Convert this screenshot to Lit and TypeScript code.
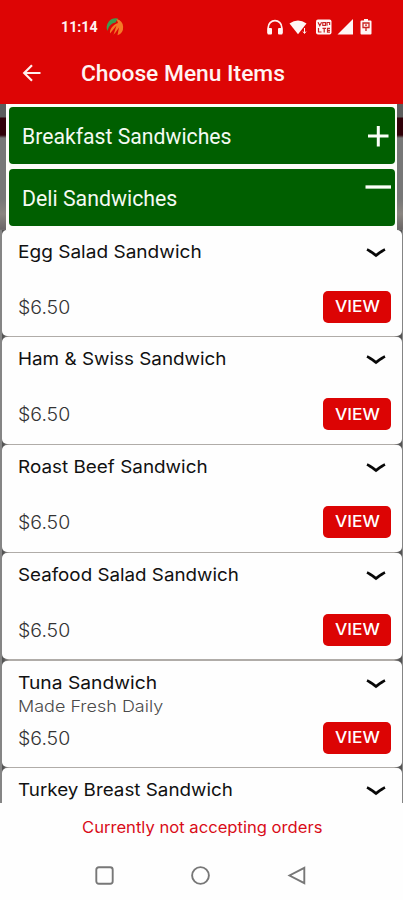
import { LitElement, html, svg, css } from "lit";
import { customElement, property } from "lit/decorators.js";

/** One line of text, set wide or narrow so that it spans the given width. */
@customElement("fitted-text")
class FittedText extends LitElement {
  static styles = css`
    :host { display: block; white-space: nowrap; }
    .run { display: inline-block; transform-origin: 0 50%; }
  `;
  @property() text = "";
  @property({ type: Number }) span = 0;
  updated() {
    const run = this.renderRoot.querySelector(".run") as HTMLElement;
    run.style.transform = `scaleX(${this.span / run.offsetWidth})`;
    this.style.width = `${this.span}px`;
  }
  render() {
    return html`<span class="run">${this.text}</span>`;
  }
}

interface Item { name: string; span: number; note?: string; price?: string; }

const items: Item[] = [
  { name: "Egg Salad Sandwich", span: 184, price: "$6.50" },
  { name: "Ham & Swiss Sandwich", span: 208, price: "$6.50" },
  { name: "Roast Beef Sandwich", span: 190, price: "$6.50" },
  { name: "Seafood Salad Sandwich", span: 221, price: "$6.50" },
  { name: "Tuna Sandwich", span: 138.5, note: "Made Fresh Daily", price: "$6.50" },
  { name: "Turkey Breast Sandwich", span: 215 },
];

@customElement("menu-card")
class MenuCard extends LitElement {
  static styles = css`
    :host { display: block; height: 107.8px; box-sizing: border-box; padding: 0 1px 1.4px 2px; }
    .card {
      height: 100%; box-sizing: border-box; background: #fefefe; border-radius: 5px;
      padding: 10px 11px 0 16px; display: flex; flex-direction: column;
      font-family: Inter, sans-serif; color: #111;
    }
    .top { display: flex; justify-content: space-between; height: 24px; }
    .name { font-size: 17.5px; line-height: 24px; }
    .chev { width: 20px; height: 10px; margin: 8px 5px 0 0; }
    .note { height: 23px; font-size: 16.5px; line-height: 22px; font-weight: 300; color: #4a4a4a; }
    .bottom { display: flex; justify-content: space-between; align-items: flex-start; padding-top: 4px; }
    .price { font-size: 18px; line-height: 33px; font-weight: 300; color: #333; }
    .view {
      width: 68px; height: 32px; border-radius: 5px; background: #dc0404; color: #fff;
      display: flex; align-items: center; justify-content: center;
      font-size: 15.6px; line-height: 20px; font-weight: 500; padding-top: .5px; box-sizing: border-box;
    }
  `;
  @property({ attribute: false }) item!: Item;
  render() {
    const i = this.item;
    return html`<div class="card">
      <div class="top">
        <fitted-text class="name" .text=${i.name} .span=${i.span}></fitted-text>
        <svg class="chev" viewBox="0 0 20 10"><path d="M1 1.500C3.500 2.500 7 5.200 10 7.400C13 5.200 16.500 2.500 19 1.500" fill="none" stroke="#080808" stroke-width="2.900"/></svg>
      </div>
      <div class="note">${i.note ? html`<fitted-text .text=${i.note} .span=${145}></fitted-text>` : ""}</div>
      ${i.price
        ? html`<div class="bottom">
            <fitted-text class="price" .text=${i.price} .span=${52}></fitted-text>
            <div class="view"><fitted-text .text=${"VIEW"} .span=${44.5}></fitted-text></div>
          </div>`
        : ""}
    </div>`;
  }
}

const statusIcons = svg`
  <g fill="#fff6f5">
    <path d="M1.200 14V8.500a6.800 6.800 0 0 1 13.600 0V14" fill="none" stroke="#fff0ee" stroke-width="1.700"/>
    <rect x=".4" y="9" width="4.600" height="6.600" rx="1"/><rect x="11" y="9" width="4.600" height="6.600" rx="1"/>
    <path d="M22.500 4.600Q31 -1.400 39.500 4.600L31 15.200Z"/>
    <path d="M37.500 9v5M36 12.500l1.500 2 1.500-2" stroke="#fff0ee" fill="none" stroke-width="1"/>
    <rect x="49" y=".5" width="15.500" height="15" rx="2"/>
    <path d="M86 0V15.500H70.500Z"/>
    <path d="M94.500 1.500H97V0h4v1.500h2.500a1 1 0 0 1 1 1V14.500a1 1 0 0 1-1 1H94.500a1 1 0 0 1-1-1V2.500a1 1 0 0 1 1-1Z"/>
  </g>
  <g fill="none" stroke="#c92422" stroke-width="1.200">
    <path d="M51 3.300l1.800 3.500 1.800-3.500M55.800 3.500h2.600v3h-2.600ZM60 6.800V3.500h2.600V6M51.500 9v4h3M55.500 9.300h3.500M57.200 9.300V13.500M63 9.300H60.500V13.200H63M60.500 11.300H63"/>
    <path d="M96 4h6v4.500h-6ZM98 6.200h2M99 8.500v3.500" stroke-width="1.300"/>
  </g>`;

@customElement("app-root")
class AppRoot extends LitElement {
  static styles = css`
    :host {
      display: flex; flex-direction: column; width: 403px; height: 900px; overflow: hidden;
      background: #fefefe; font-family: Roboto, sans-serif;
    }
    .head { height: 104px; flex: none; background: #dd0505; color: #fff3f2; }
    .status { height: 46px; box-sizing: border-box; padding: 18px 30px 0 61px; display: flex; }
    .clock { font-size: 15.2px; line-height: 18px; font-weight: 700; }
    .logo { width: 18px; height: 18px; margin-left: 8px; }
    .signals { width: 106px; height: 16px; margin: 1px 0 0 auto; }
    .bar { display: flex; align-items: center; height: 54px; padding-left: 22px; }
    .back { width: 20px; height: 18px; margin-right: 39px; }
    .title { font-size: 22.5px; line-height: 28px; font-weight: 500; }
    .scroll {
      height: 699px; flex: none; overflow: hidden;
      background: linear-gradient(#5d5d5d 0 13px, #300008 14px 31px, #777 34px 95px, #8a8580 110px, #6b6767 125px, #858585 128px 100%);
    }
    .groups { margin: 0 6px 0 6px; height: 125.5px; box-sizing: border-box; padding: 2.5px 2.5px 0 2.5px; background: #fdfdf9; }
    .group {
      height: 57.5px; margin-bottom: 4.700px; box-sizing: border-box; border-radius: 4px; background: #005f00;
      display: flex; justify-content: space-between; padding: 0 4px 0 13.5px; color: #f4faf2;
    }
    .label { font-size: 22px; line-height: 60px; }
    .sign { width: 26px; height: 26px; margin-top: 16px; }
    .sign.minus { margin-top: 5px; }
    .list { background: linear-gradient(90deg, #555 0 4px, #b0aca8 9px, #b0aca8 394px, #555 399px); }
    .edge { background: linear-gradient(90deg, #858585 0 2px, transparent 2px 402px, #858585 402px); }
    .notice { height: 48px; flex: none; display: flex; justify-content: center; color: #d90c18; font: 15.5px/50px Inter, sans-serif; }
    .nav { display: flex; justify-content: center; gap: 77px; padding: 15px 2px 0 0; }
    .nav svg { width: 19px; height: 19px; fill: none; stroke: #777; stroke-width: 1.900; }
  `;
  render() {
    return html`
      <div class="head">
        <div class="status">
          <fitted-text class="clock" .text=${"11:14"} .span=${36.5}></fitted-text>
          <svg class="logo" viewBox="0 0 18 18">
            <path d="M1.500 13A9 9 0 0 1 12 .6L9.500 4.500C5 5.500 2.500 8.500 1.500 13Z" fill="#3c9c50"/>
            <path d="M10.500 1A8.500 8.500 0 0 1 11.500 17.300L13 9.500 9.500 14.500 7.500 16.800 10.500 7.500 4 15.500C3.500 11 7 7 12 5Z" fill="#f47a27"/>
          </svg>
          <svg class="signals" viewBox="0 0 106 16">${statusIcons}</svg>
        </div>
        <div class="bar">
          <svg class="back" viewBox="0 0 20 18"><path d="M18.500 9H2.500M10 1.200L2.200 9l7.800 7.800" fill="none" stroke="#fff0ee" stroke-width="2.200"/></svg>
          <fitted-text class="title" .text=${"Choose Menu Items"} .span=${203.5}></fitted-text>
        </div>
      </div>
      <div class="scroll">
        <div class="groups">
          <div class="group">
            <fitted-text class="label" .text=${"Breakfast Sandwiches"} .span=${210}></fitted-text>
            <svg class="sign" viewBox="0 0 26 26"><path d="M3 13H23.500M13.300 3V23.500" stroke="#fbfff8" stroke-width="3"/></svg>
          </div>
          <div class="group">
            <fitted-text class="label" .text=${"Deli Sandwiches"} .span=${155}></fitted-text>
            <svg class="sign minus" viewBox="0 0 26 26"><path d="M.5 13H26" stroke="#fbfff8" stroke-width="3.300"/></svg>
          </div>
        </div>
        <div class="list">
          ${items.map((i) => html`<div class="edge"><menu-card .item=${i}></menu-card></div>`)}
        </div>
      </div>
      <div class="notice"><fitted-text .text=${"Currently not accepting orders"} .span=${240}></fitted-text></div>
      <div class="nav">
        <svg viewBox="0 0 19 19"><rect x="1.300" y="1.300" width="16.400" height="16.400" rx="2.500"/></svg>
        <svg viewBox="0 0 19 19"><circle cx="9.500" cy="9.500" r="8.400"/></svg>
        <svg viewBox="0 0 19 19"><path d="M17.300 1.800V17.200L2.500 9.500Z"/></svg>
      </div>`;
  }
}
